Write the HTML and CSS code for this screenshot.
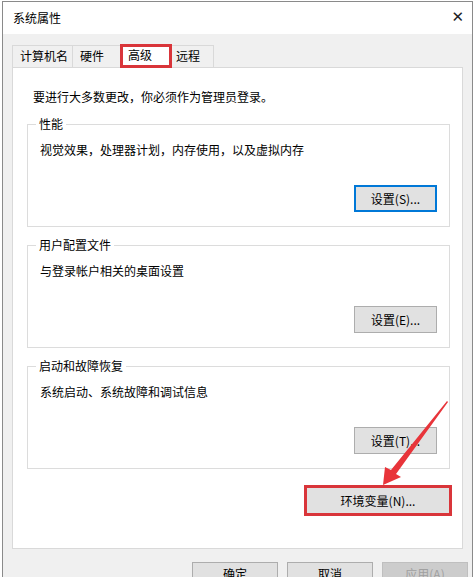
FILE: index.html
```html
<!DOCTYPE html>
<html lang="zh-CN">

<head>
    <meta charset="UTF-8">
    <meta name="viewport" content="width=device-width, initial-scale=1.0">
    <title>系统属性</title>
    <link rel="stylesheet" href="styles.css">
</head>

<body>
    <div class="window">
        <div class="title-bar">
            <span class="title">系统属性</span>
            <span class="close">&#x2715;</span>
        </div>

        <div class="client">
            <div class="tabs">
                <div class="tab tab-name">计算机名</div>
                <div class="tab tab-hw">硬件</div>
                <div class="tab active marked">高级</div>
                <div class="tab tab-remote">远程</div>
            </div>

            <div class="panel">
                <p class="notice">要进行大多数更改，你必须作为管理员登录。</p>

                <fieldset class="group">
                    <legend>性能</legend>
                    <p class="group-text">视觉效果，处理器计划，内存使用，以及虚拟内存</p>
                    <div class="group-actions">
                        <button type="button" class="btn default">设置(S)...</button>
                    </div>
                </fieldset>

                <fieldset class="group">
                    <legend>用户配置文件</legend>
                    <p class="group-text">与登录帐户相关的桌面设置</p>
                    <div class="group-actions">
                        <button type="button" class="btn">设置(E)...</button>
                    </div>
                </fieldset>

                <fieldset class="group">
                    <legend>启动和故障恢复</legend>
                    <p class="group-text">系统启动、系统故障和调试信息</p>
                    <div class="group-actions">
                        <button type="button" class="btn">设置(T)...</button>
                    </div>
                </fieldset>

                <div class="env-row">
                    <div class="env-mark">
                        <button type="button" class="btn env-btn">环境变量(N)...</button>
                    </div>
                </div>
            </div>

            <div class="dialog-buttons">
                <button type="button" class="btn wide">确定</button>
                <button type="button" class="btn wide">取消</button>
                <button type="button" class="btn wide" disabled>应用(A)</button>
            </div>
        </div>
    </div>

    <!-- annotation arrow pointing at the env button -->
    <svg class="arrow" width="475" height="577" viewBox="0 0 475 577">
        <polygon points="383,485 385,467 391,470 447,401 448,402 396,474 401,477" fill="#e8343a" />
    </svg>
</body>

</html>
```

FILE: styles.css
```css
body {
    margin: 0;
    background: #ffffff;
    font-family: "Noto Sans CJK SC", "Liberation Sans", sans-serif;
    font-size: 12px;
    color: #000000;
    height: 577px;
    overflow: hidden;
}

.window {
    margin: 1px 2px 0 2px;
    border: 1px solid #8a8a8a;
    border-bottom: none;
    height: 600px;
    background: #f0f0f0;
}

.title-bar {
    height: 32px;
    background: #ffffff;
    display: flex;
    align-items: center;
    justify-content: space-between;
    padding: 0 8px 0 10px;
}

.title {
    font-size: 12px;
    margin-top: -2px;
}

.close {
    font-size: 15px;
    font-family: "DejaVu Sans", sans-serif;
    color: #222222;
    margin-top: -2px;
}

.client {
    padding: 10px 9px 0 9px;
}

.tabs {
    display: flex;
    align-items: flex-end;
    height: 23px;
    position: relative;
    z-index: 1;
}

.tab {
    height: 22px;
    line-height: 20px;
    padding: 0 0 0 7px;
    border: 1px solid #d9d9d9;
    border-bottom: none;
    margin-right: -1px;
    background: #f0f0f0;
    box-sizing: border-box;
}

.tab-name {
    width: 61px;
}

.tab-hw {
    width: 49px;
}

.tab-remote {
    width: 43px;
    padding-left: 4px;
}

.tab.active {
    height: 24px;
    background: #ffffff;
    width: 52px;
}

.tab.marked {
    border: 3px solid #d9353a;
    padding: 0 0 0 5px;
    line-height: 15px;
    margin-bottom: -1px;
    position: relative;
    z-index: 2;
}

.panel {
    background: #ffffff;
    border: 1px solid #d9d9d9;
    height: 482px;
    padding: 0 12px 0 14px;
    box-sizing: border-box;
}

.notice {
    margin: 20px 0 0 6px;
    line-height: 18px;
}

.group {
    margin: 10px 0 0 0;
    padding: 0 12px 14px 12px;
    border: 1px solid #dcdcdc;
    height: 111px;
    box-sizing: border-box;
    display: flex;
    flex-direction: column;
}

.group legend {
    padding: 0 3px;
    margin-left: -4px;
    line-height: 16px;
}

.group-text {
    margin: 9px 0 0 0;
    line-height: 18px;
}

.group-actions {
    margin-top: auto;
    display: flex;
    justify-content: flex-end;
}

.btn {
    font-family: "Noto Sans CJK SC", "Liberation Sans", sans-serif;
    font-size: 12px;
    background: #e1e1e1;
    border: 1px solid #adadad;
    color: #000000;
    width: 83px;
    height: 27px;
    padding: 0;
    line-height: 18px;
}

.btn.default {
    border: 2px solid #0078d7;
}

.btn:disabled {
    background: #cccccc;
    border-color: #bfbfbf;
    color: #a0a0a0;
}

.env-row {
    display: flex;
    justify-content: flex-end;
    margin-top: 16px;
    margin-right: -2px;
}

.env-mark {
    border: 3px solid #d9353a;
    background: #e1e1e1;
}

.env-btn {
    width: 142px;
    height: 25px;
    border: none;
}

.dialog-buttons {
    display: flex;
    justify-content: flex-end;
    gap: 9px;
    margin-top: 13px;
    margin-right: -5px;
}

.btn.wide {
    width: 86px;
    height: 24px;
}

.arrow {
    position: absolute;
    left: 0;
    top: 0;
    pointer-events: none;
}
```
